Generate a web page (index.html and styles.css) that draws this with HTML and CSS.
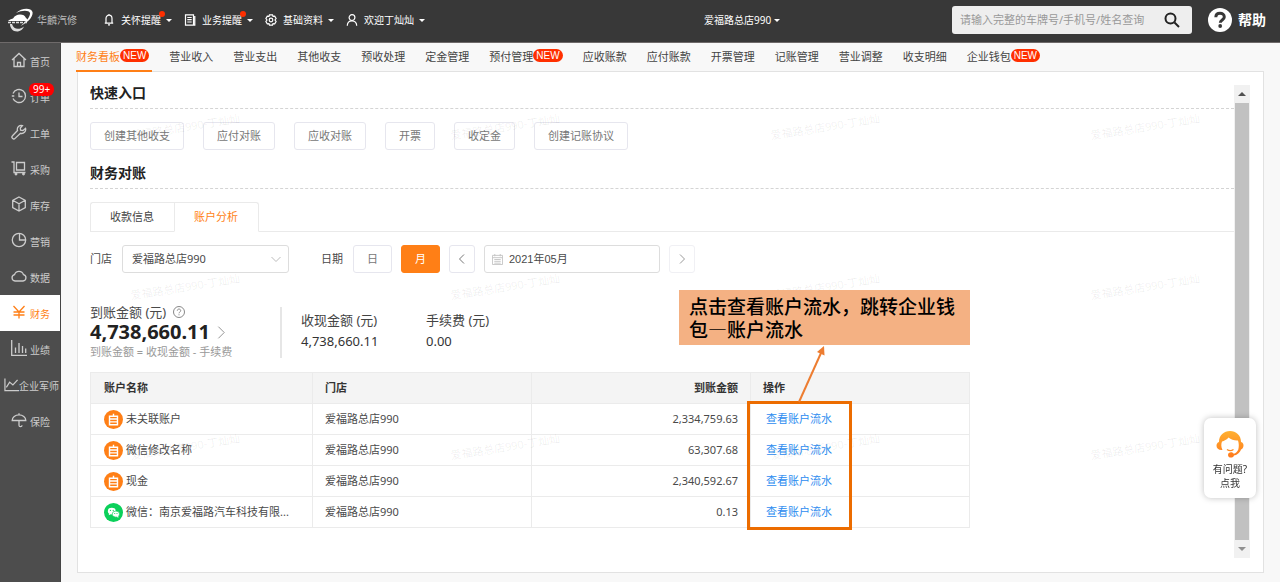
FILE: index.html
```html
<!DOCTYPE html>
<html lang="zh-CN">
<head>
<meta charset="utf-8">
<title>财务看板</title>
<link rel="stylesheet" href="styles.css">
</head>
<body>
<header class="topbar">
  <a class="brand" href="#">
    <svg class="brand-mark" viewBox="0 0 26 24" aria-hidden="true">
      <path d="M8 5C13 0 23-1 24.500 4c1 5-5 11-12 14 5-4 10-9 9.500-13C21 2 14 2 8 5z" fill="#fff"/>
      <path d="M0 13c1-1 3-2 5-2.500 2-3 4-4 7-4s5 1 6 3.500c1 .5 1.500 1.500 1.500 3z" fill="#fff"/>
      <path d="M0 14.500h20" stroke="#ddd" stroke-width="1.500" stroke-dasharray="3 1"/>
      <path d="M2 16c0 4 3 8 8 7.500 3-.5 5-2.500 6-5-4 3-10 4-12-2.500z" fill="#ddd"/>
    </svg>
    <span>华麟汽修</span>
  </a>
  <nav class="topnav">
    <a class="topitem" href="#">
      <svg viewBox="0 0 12 12"><path d="M3 9V4.500C3 2.500 4.300 1.200 6 1.200S9 2.500 9 4.500V9M1.800 9.200h8.400M5 10.800h2M6 0v1"/></svg>
      <span class="toptext">关怀提醒<i class="dot"></i></span><b class="caret"></b>
    </a>
    <a class="topitem" href="#">
      <svg viewBox="0 0 12 12"><path d="M1.500.8h8v10.400h-8zM10.800 2v9.200H4M3.300 3.500h4.400M3.300 5.700h4.400M3.300 8h4.400"/></svg>
      <span class="toptext">业务提醒<i class="dot"></i></span><b class="caret"></b>
    </a>
    <a class="topitem" href="#">
      <svg viewBox="0 0 12 12"><path d="M4.500.8h3l.5 1.500 1.700-.2 1.400 2.400L10 6l1.100 1.500-1.400 2.400L8 9.700l-.5 1.500h-3L4 9.700l-1.700.2L.9 7.500 2 6 .9 4.500l1.400-2.400L4 2.300z"/><circle cx="6" cy="6" r="1.800"/></svg>
      <span class="toptext">基础资料</span><b class="caret"></b>
    </a>
    <a class="topitem" href="#">
      <svg viewBox="0 0 12 12"><circle cx="6" cy="3.600" r="2.900"/><path d="M1.300 11.800c0-3 1.800-5 4.700-5s4.700 2 4.700 5"/></svg>
      <span class="toptext">欢迎丁灿灿</span><b class="caret"></b>
    </a>
  </nav>
  <a class="store" href="#"><span>爱福路总店990</span><b class="caret"></b></a>
  <form class="search">
    <input type="text" aria-label="查询" placeholder="请输入完整的车牌号/手机号/姓名查询">
    <button type="button" aria-label="搜索"><svg viewBox="0 0 16 16"><circle cx="6.500" cy="6.500" r="5"/><path d="M10.500 10.500l4.500 4.500"/></svg></button>
  </form>
  <a class="help" href="#">
    <svg viewBox="0 0 24 24" aria-hidden="true"><circle cx="12" cy="12" r="12" fill="#fff"/><path d="M7.800 9.200c.1-2.700 1.900-3.900 4.200-3.900s4.300 1.300 4.300 3.600c0 3-4 3-4 5.800" fill="none" stroke="#383838" stroke-width="3"/><circle cx="12.200" cy="18" r="1.900" fill="#383838"/></svg>
    <span>帮助</span>
  </a>
</header>

<div class="shell">
  <nav class="sidebar">
    <a class="side" href="#"><svg viewBox="0 0 16 16"><path d="M1 8l7-6.500L15 8M3 6.500V14.500h10V6.500M6.500 14.500v-4h3v4"/></svg><span>首页</span></a>
    <a class="side" href="#"><svg viewBox="0 0 16 16"><path d="M2 5.500A6.500 6.500 0 1 1 2 10.500M.8 8h2.500M8 4.500V8.500h3.500"/></svg><span>订单</span><em class="count">99+</em></a>
    <a class="side" href="#"><svg viewBox="0 0 16 16"><path d="M11.500 1.500a4 4 0 0 0-5 5L1.500 11.800a1.800 1.800 0 0 0 2.600 2.600L9.500 9.300a4 4 0 0 0 5-5L12 6.500 9.600 6.200 9.300 4z"/></svg><span>工单</span></a>
    <a class="side" href="#"><svg viewBox="0 0 16 16"><path d="M.5 2H3v10.500h11.500M5.500 2.500h8v7.500h-8z"/><circle cx="5" cy="14" r=".8"/><circle cx="12.500" cy="14" r=".8"/></svg><span>采购</span></a>
    <a class="side" href="#"><svg viewBox="0 0 16 16"><path d="M8 1l6.300 3.300v7.400L8 15l-6.300-3.300V4.300zM1.700 4.300L8 7.800l6.300-3.500M8 7.800V15"/></svg><span>库存</span></a>
    <a class="side" href="#"><svg viewBox="0 0 16 16"><circle cx="8" cy="8" r="6.700"/><path d="M8.500 1.300V8h6.200"/></svg><span>营销</span></a>
    <a class="side" href="#"><svg viewBox="0 0 16 16"><path d="M4 13a3.200 3.200 0 0 1-.5-6.300 4.700 4.700 0 0 1 9 0A3.200 3.200 0 0 1 12 13z"/></svg><span>数据</span></a>
    <a class="side active" href="#"><svg viewBox="0 0 16 16"><path d="M2.500 2L8 8l5.500-6M8 8v6.500M2.500 8h11M2.500 11h11"/></svg><span>财务</span></a>
    <a class="side" href="#"><svg viewBox="0 0 16 16"><path d="M.7 0v15.300H16M4.500 13V7.500M8 13V3M11.500 13V6M14.700 13V8.500"/></svg><span>业绩</span></a>
    <a class="side wide" href="#"><svg viewBox="0 0 16 16"><path d="M1 1.500v13h15M2.500 11L6 5.500l3.500 3L14.500 3"/></svg><span>企业军师</span></a>
    <a class="side" href="#"><svg viewBox="0 0 16 16"><path d="M1.200 8.500a6.800 5.600 0 0 1 13.600 0zM8 1.300v1.500M8 8.500v4.700a1.500 1.500 0 0 0 3 0"/></svg><span>保险</span></a>
  </nav>

  <main class="main">
    <nav class="tabs">
      <a class="tab current" href="#">财务看板<em class="new">NEW</em></a>
      <a class="tab" href="#">营业收入</a>
      <a class="tab" href="#">营业支出</a>
      <a class="tab" href="#">其他收支</a>
      <a class="tab" href="#">预收处理</a>
      <a class="tab" href="#">定金管理</a>
      <a class="tab" href="#">预付管理<em class="new">NEW</em></a>
      <a class="tab" href="#">应收账款</a>
      <a class="tab" href="#">应付账款</a>
      <a class="tab" href="#">开票管理</a>
      <a class="tab" href="#">记账管理</a>
      <a class="tab" href="#">营业调整</a>
      <a class="tab" href="#">收支明细</a>
      <a class="tab" href="#">企业钱包<em class="new">NEW</em></a>
    </nav>

    <section class="panel">
      <div class="content">
        <h2 class="title">快速入口</h2>
        <div class="quick">
          <button type="button" class="btn">创建其他收支</button>
          <button type="button" class="btn">应付对账</button>
          <button type="button" class="btn">应收对账</button>
          <button type="button" class="btn">开票</button>
          <button type="button" class="btn">收定金</button>
          <button type="button" class="btn">创建记账协议</button>
        </div>

        <h2 class="title">财务对账</h2>
        <div class="subtabs">
          <button type="button" class="subtab">收款信息</button>
          <button type="button" class="subtab on">账户分析</button>
        </div>

        <div class="filters">
          <label for="store">门店</label>
          <div class="select">
            <select id="store"><option>爱福路总店990</option></select>
            <svg viewBox="0 0 10 10"><path d="M.5 3L5 7.500 9.500 3"/></svg>
          </div>
          <label class="date-label" for="month">日期</label>
          <div class="date">
            <button type="button" class="btn unit">日</button>
            <button type="button" class="btn unit picked">月</button>
            <button type="button" class="btn step" aria-label="上个月"><svg viewBox="0 0 10 10"><path d="M7 .5L2.500 5 7 9.500"/></svg></button>
            <div class="month">
              <svg viewBox="0 0 12 12"><path d="M.5 1.500h11v10H.5zM.5 4h11M3 0v2.500M9 0v2.500M2.500 6h7M2.500 8h7M2.500 10h7"/></svg>
              <input id="month" type="text" value="2021年05月">
            </div>
            <button type="button" class="btn step faint" aria-label="下个月"><svg viewBox="0 0 10 10"><path d="M3 .5L7.500 5 3 9.500"/></svg></button>
          </div>
        </div>

        <div class="stats">
          <div class="total">
            <div class="stat-name">到账金额 (元)<svg class="q" viewBox="0 0 12 12"><circle cx="6" cy="6" r="5.500"/><path d="M4.300 4.700C4.300 2.500 7.700 2.500 7.700 4.700 7.700 6 6 6 6 7.300M6 8.300v1"/></svg></div>
            <div class="big">4,738,660.11<svg viewBox="0 0 10 16"><path d="M1.500 1.500L8 8l-6.500 6.500"/></svg></div>
            <div class="note">到账金额 = 收现金额 - 手续费</div>
          </div>
          <div class="stat">
            <div class="stat-name">收现金额 (元)</div>
            <div class="stat-value">4,738,660.11</div>
          </div>
          <div class="stat">
            <div class="stat-name">手续费 (元)</div>
            <div class="stat-value">0.00</div>
          </div>
        </div>

        <div class="table-wrap">
          <table class="accounts">
            <thead>
              <tr><th class="name">账户名称</th><th>门店</th><th class="num">到账金额</th><th>操作</th></tr>
            </thead>
            <tbody>
              <tr>
                <td><div class="account"><svg class="coin" viewBox="0 0 20 20"><circle cx="10" cy="10" r="10" fill="#ff7f16"/><path d="M5.800 6.500h8.400v9H5.800zM5.800 9.500h8.400M5.800 12.500h8.400M10 4v2.500"/></svg>未关联账户</div></td>
                <td>爱福路总店990</td><td class="num">2,334,759.63</td><td><a href="#">查看账户流水</a></td>
              </tr>
              <tr>
                <td><div class="account"><svg class="coin" viewBox="0 0 20 20"><circle cx="10" cy="10" r="10" fill="#ff7f16"/><path d="M5.800 6.500h8.400v9H5.800zM5.800 9.500h8.400M5.800 12.500h8.400M10 4v2.500"/></svg>微信修改名称</div></td>
                <td>爱福路总店990</td><td class="num">63,307.68</td><td><a href="#">查看账户流水</a></td>
              </tr>
              <tr>
                <td><div class="account"><svg class="coin" viewBox="0 0 20 20"><circle cx="10" cy="10" r="10" fill="#ff7f16"/><path d="M5.800 6.500h8.400v9H5.800zM5.800 9.500h8.400M5.800 12.500h8.400M10 4v2.500"/></svg>现金</div></td>
                <td>爱福路总店990</td><td class="num">2,340,592.67</td><td><a href="#">查看账户流水</a></td>
              </tr>
              <tr>
                <td><div class="account"><svg class="wechat" viewBox="0 0 20 20"><circle cx="10" cy="10" r="10" fill="#0bd05a"/><ellipse cx="8.200" cy="8.500" rx="4.200" ry="3.500" fill="#fff"/><path d="M5.300 10.500L5 13l2.500-1.300z" fill="#fff"/><ellipse cx="12.500" cy="11.700" rx="3.900" ry="3.200" fill="#fff" stroke="#0bd05a" stroke-width=".7"/><path d="M13 14.500l2.200 1-.3-2z" fill="#fff"/><g fill="#0bd05a"><circle cx="6.800" cy="7.700" r=".7"/><circle cx="9.700" cy="7.700" r=".7"/><circle cx="11.300" cy="11" r=".6"/><circle cx="13.700" cy="11" r=".6"/></g></svg>微信：南京爱福路汽车科技有限...</div></td>
                <td>爱福路总店990</td><td class="num">0.13</td><td><a href="#">查看账户流水</a></td>
              </tr>
            </tbody>
          </table>
          <div class="highlight"></div>
          <svg class="arrow" viewBox="0 0 30 58" aria-hidden="true"><path d="M3 57L25 8" stroke="#ed7d31" stroke-width="2"/><path d="M28 1l.5 9.500-7.500-3.400z" fill="#ed7d31"/></svg>
          <p class="callout">点击查看账户流水，跳转企业钱包—账户流水</p>
        </div>
      </div>

      <div class="scrollbar" aria-hidden="true">
        <span class="arrow-box"><i class="up"></i></span>
        <span class="thumb"></span>
        <span class="arrow-box"><i class="down"></i></span>
      </div>

      <div class="watermark" aria-hidden="true">
        <span>爱福路总店990-丁灿灿</span><span>爱福路总店990-丁灿灿</span><span>爱福路总店990-丁灿灿</span><span>爱福路总店990-丁灿灿</span>
        <span>爱福路总店990-丁灿灿</span><span>爱福路总店990-丁灿灿</span><span>爱福路总店990-丁灿灿</span><span>爱福路总店990-丁灿灿</span>
        <span>爱福路总店990-丁灿灿</span><span>爱福路总店990-丁灿灿</span><span>爱福路总店990-丁灿灿</span><span>爱福路总店990-丁灿灿</span>
      </div>
    </section>
  </main>
</div>

<button type="button" class="assist">
  <svg viewBox="0 0 28 28" aria-hidden="true">
    <defs><linearGradient id="warm" x1="0" y1="0" x2="0" y2="1"><stop offset="0" stop-color="#ffb031"/><stop offset="1" stop-color="#ff7a1c"/></linearGradient></defs>
    <path d="M3 12C3 5 8 1 14 1s11 4 11 11c2 .5 2.500 2 2.500 3.500S26.500 19 25 19.500C23.500 23.500 20.500 25 18 25.500 17.500 27 16.500 27.500 15 27.500c-1.700 0-3-1-3-2.600s1.300-2.700 3-2.700c1.300 0 2.300.6 2.800 1.500 2-.5 3.500-2 4.500-4.200.7-3 .7-6-.3-9-3 .3-7-.7-9.500-3C11 9.500 8 11 6 11.500 5 14 5 17 6.500 20 3 20.500.5 18.500.5 15.800.5 14 1.300 12.500 3 12z" fill="url(#warm)"/>
    <path d="M11 19.500c2 1.500 4.500 1.500 6.500 0" fill="none" stroke="#ff8a20" stroke-width="1.200"/>
  </svg>
  <span>有问题?</span>
  <span>点我</span>
</button>
</body>
</html>
```
FILE: styles.css
```css
* { box-sizing: border-box; }

body {
  margin: 0;
  min-height: 100vh;
  display: flex;
  flex-direction: column;
  background: #f8f8f8;
  color: #4a4a4a;
  font-family: "Noto Sans", "Noto Sans CJK SC", sans-serif;
  font-size: 11px;
  line-height: 16px;
}

a { color: inherit; text-decoration: none; }
button, input, select { font: inherit; color: inherit; }
button { cursor: pointer; }
svg { display: block; flex: none; fill: none; stroke: currentColor; }
i, em { font-style: normal; }

/* top bar */
.topbar {
  display: flex;
  align-items: center;
  height: 43px;
  padding: 0 14px 2px 8px;
  background: #383838;
  border-bottom: 1px solid #6e6a6a;
  color: #fff;
  font-size: 10px;
}
.brand { display: flex; align-items: center; gap: 3px; color: #bbb; }
.brand-mark { width: 26px; height: 24px; stroke: none; }
.topnav { display: flex; gap: 12px; margin-left: 26px; }
.topitem { display: flex; align-items: center; }
.topitem svg { width: 12px; height: 12px; margin-right: 6px; stroke-width: 1.2; }
.toptext { position: relative; }
.dot {
  position: absolute;
  right: -4px;
  top: -1px;
  width: 6px;
  height: 6px;
  border-radius: 50%;
  background: #ff2f00;
}
.caret {
  margin-left: 5px;
  border: 3px solid transparent;
  border-top-color: #fff;
  border-bottom: 0;
}
.store { display: flex; align-items: center; margin-right: auto; margin-left: 279px; }
.store .caret { margin-left: 3px; }
.search {
  display: flex;
  align-items: center;
  width: 240px;
  height: 28px;
  padding: 0 12px 0 8px;
  border-radius: 3px;
  background: #eee;
}
.search input {
  flex: 1;
  min-width: 0;
  padding: 0;
  border: 0;
  background: none;
  outline: 0;
  color: #333;
  font-size: 11px;
}
.search input::placeholder { color: #999; opacity: 1; }
.search button { padding: 0; border: 0; background: none; color: #222; }
.search svg { width: 16px; height: 16px; stroke-width: 2; }
.help { display: flex; align-items: center; gap: 6px; margin-left: 16px; font-size: 14px; font-weight: 700; }
.help svg { width: 24px; height: 24px; stroke: none; }

/* frame */
.shell { flex: 1; display: flex; }
.sidebar { flex: none; width: 61px; background: #4d4d4d; border-right: 1px solid #444; }
.side {
  position: relative;
  display: flex;
  align-items: center;
  gap: 3px;
  height: 36px;
  padding-left: 11px;
  color: #ccc;
  font-size: 10px;
}
.side svg { width: 16px; height: 16px; margin-bottom: 2px; stroke-width: 1.3; }
.side span { padding-top: 2px; }
.side.active { background: #fff; color: #ff7f16; }
.side.wide { padding-left: 4px; gap: 0; }
.side.wide svg { width: 15px; height: 15px; }
.count {
  position: absolute;
  left: 29px;
  top: 4px;
  padding: 0 4px;
  border-radius: 6px;
  background: #f00;
  color: #fff;
  line-height: 13px;
}

.main { flex: 1; min-width: 0; display: flex; flex-direction: column; padding: 0 16px 9px 15px; }
.tabs { display: flex; gap: 20px; height: 28px; white-space: nowrap; color: #444; }
.tab { display: flex; height: 29px; padding-top: 6px; }
.tab.current { position: relative; z-index: 1; color: #ff7f16; }
.tab.current::after {
  content: "";
  position: absolute;
  left: 0;
  right: -3px;
  bottom: 0;
  height: 2px;
  background: #ff7f16;
}
.new {
  align-self: flex-start;
  height: 13px;
  padding: 0 3px;
  border-radius: 7px;
  background: #ff2f00;
  color: #fff;
  font-family: "Liberation Sans", sans-serif;
  font-size: 10px;
  line-height: 13px;
}

/* panel */
.panel {
  position: relative;
  flex: 1;
  display: flex;
  margin-left: 1px;
  padding: 13px 13px 14px 12px;
  border: 1px solid #e2e2e2;
  background: #fff;
}
.content { flex: 1; min-width: 0; }
.title {
  margin: 0 0 13px;
  padding-bottom: 7px;
  border-bottom: 1px dashed #d4d4d4;
  color: #222;
  font-size: 14px;
  line-height: 16px;
}
.btn {
  height: 28px;
  padding: 0 13px;
  border: 1px solid #e6e6ee;
  border-radius: 3px;
  background: #fff;
  color: #777;
}
.quick { display: flex; gap: 19px; margin-bottom: 15px; }

.subtabs { display: flex; height: 30px; border-bottom: 1px solid #eaeaea; }
.subtab {
  height: 30px;
  padding: 0 20px 0 19px;
  border: 1px solid #eaeaea;
  border-right: 0;
  background: #fff;
  color: #444;
}
.subtab:first-child { border-top-left-radius: 3px; }
.subtab.on { border-right: 1px solid #eaeaea; border-bottom-color: #fff; border-top-right-radius: 3px; color: #ff7f16; }

.filters { display: flex; align-items: center; margin-top: 13px; }
.select { position: relative; width: 167px; margin-left: 10px; }
.select select {
  width: 100%;
  height: 28px;
  padding: 0 24px 0 9px;
  border: 1px solid #ddd;
  border-radius: 3px;
  background: #fff;
  appearance: none;
}
.select svg { position: absolute; right: 8px; top: 9px; width: 10px; height: 10px; color: #bbb; }
.date-label { margin-left: 32px; }
.date { display: flex; gap: 9px; margin-left: 10px; }
.unit { width: 39px; }
.picked { border-color: #ff7f16; background: #ff7f16; color: #fff; }
.step { display: flex; align-items: center; justify-content: center; width: 26px; padding: 0; }
.step svg { width: 10px; height: 10px; }
.faint { border-color: #f0f0f4; color: #999; }
.month {
  display: flex;
  align-items: center;
  gap: 6px;
  width: 176px;
  height: 28px;
  padding: 0 7px;
  border: 1px solid #ddd;
  border-radius: 3px;
}
.month svg { width: 11px; height: 11px; color: #c4c4c4; }
.month input { flex: 1; min-width: 0; padding: 0; border: 0; background: none; outline: 0; font-family: "Liberation Sans", "Noto Sans CJK SC", sans-serif; }

.stats { display: flex; align-items: center; margin-top: 31px; }
.total { width: 190px; }
.stat-name { display: flex; align-items: center; gap: 7px; font-size: 13px; }
.q { width: 12px; height: 12px; color: #888; }
.big { display: flex; align-items: center; gap: 7px; color: #222; font-size: 20px; font-weight: 700; line-height: 24px; }
.big svg { width: 9px; height: 15px; color: #888; }
.note { color: #999; }
.stat { width: 125px; padding-bottom: 4px; color: #444; font-size: 13px; }
.stat .stat-name { margin-bottom: 5px; }
.total + .stat { box-sizing: content-box; padding: 5px 0 9px 19px; border-left: 2px solid #e6e6e6; }
.stat-value { color: #333; }

.table-wrap { position: relative; width: 880px; max-width: 100%; margin-top: 12px; }
.accounts { width: 100%; table-layout: fixed; border-collapse: collapse; border: 1px solid #ebebeb; }
.accounts th, .accounts td { height: 31px; padding: 0 12px; border: 1px solid #ebebeb; text-align: left; white-space: nowrap; }
.accounts th { background: #f4f4f4; color: #333; font-weight: 700; }
.accounts .name { width: 222px; }
.accounts td:first-child, .accounts .name { padding: 0 8px 0 13px; }
.accounts td:last-child { padding-left: 15px; }
.accounts .num { text-align: right; }
.account { display: flex; align-items: center; gap: 3px; }
.account svg { width: 19px; height: 19px; stroke: none; }
.coin path { stroke: #fff; stroke-width: 1.5; }
.accounts a { color: #2d8cf0; }

/* annotation drawn over the table */
.highlight { position: absolute; z-index: 3; left: 657px; top: 29px; width: 105px; height: 129px; border: 3px solid #ec6c00; pointer-events: none; }
.arrow { position: absolute; z-index: 3; left: 706px; top: -27px; width: 30px; height: 58px; stroke: none; }
.callout {
  position: absolute;
  z-index: 3;
  left: 589px;
  top: -82px;
  width: 291px;
  margin: 0;
  padding: 4px 10px 5px;
  background: #f4b183;
  color: #000;
  font-family: "Noto Sans CJK SC", sans-serif;
  font-size: 19px;
  font-weight: 500;
  line-height: 23px;
}

.scrollbar { flex: none; width: 16px; display: flex; flex-direction: column; background: #f1f1f1; }
.arrow-box { display: flex; align-items: center; justify-content: center; height: 18px; }
.up { border: 4px solid transparent; border-bottom-color: #505050; border-top: 0; }
.down { border: 4px solid transparent; border-top-color: #909090; border-bottom: 0; }
.thumb { flex: 1; margin: 0 1px; background: #c1c1c1; }

.watermark {
  position: absolute;
  z-index: 2;
  inset: 0;
  display: grid;
  grid-template-columns: repeat(4, 320px);
  grid-auto-rows: 160px;
  padding: 47px 0 0 52px;
  overflow: hidden;
  pointer-events: none;
  color: rgba(0, 0, 0, .07);
}
.watermark span { justify-self: start; align-self: start; transform: rotate(-9deg); }

.assist {
  position: fixed;
  z-index: 4;
  right: 24px;
  bottom: 84px;
  display: flex;
  flex-direction: column;
  align-items: center;
  width: 52px;
  padding: 12px 0 8px;
  border: 0;
  border-radius: 7px;
  background: #fff;
  box-shadow: 0 0 6px rgba(0, 0, 0, .25);
  color: #333;
  font-size: 10px;
  line-height: 14px;
}
.assist svg { width: 28px; height: 28px; margin-bottom: 4px; stroke: none; }
```
